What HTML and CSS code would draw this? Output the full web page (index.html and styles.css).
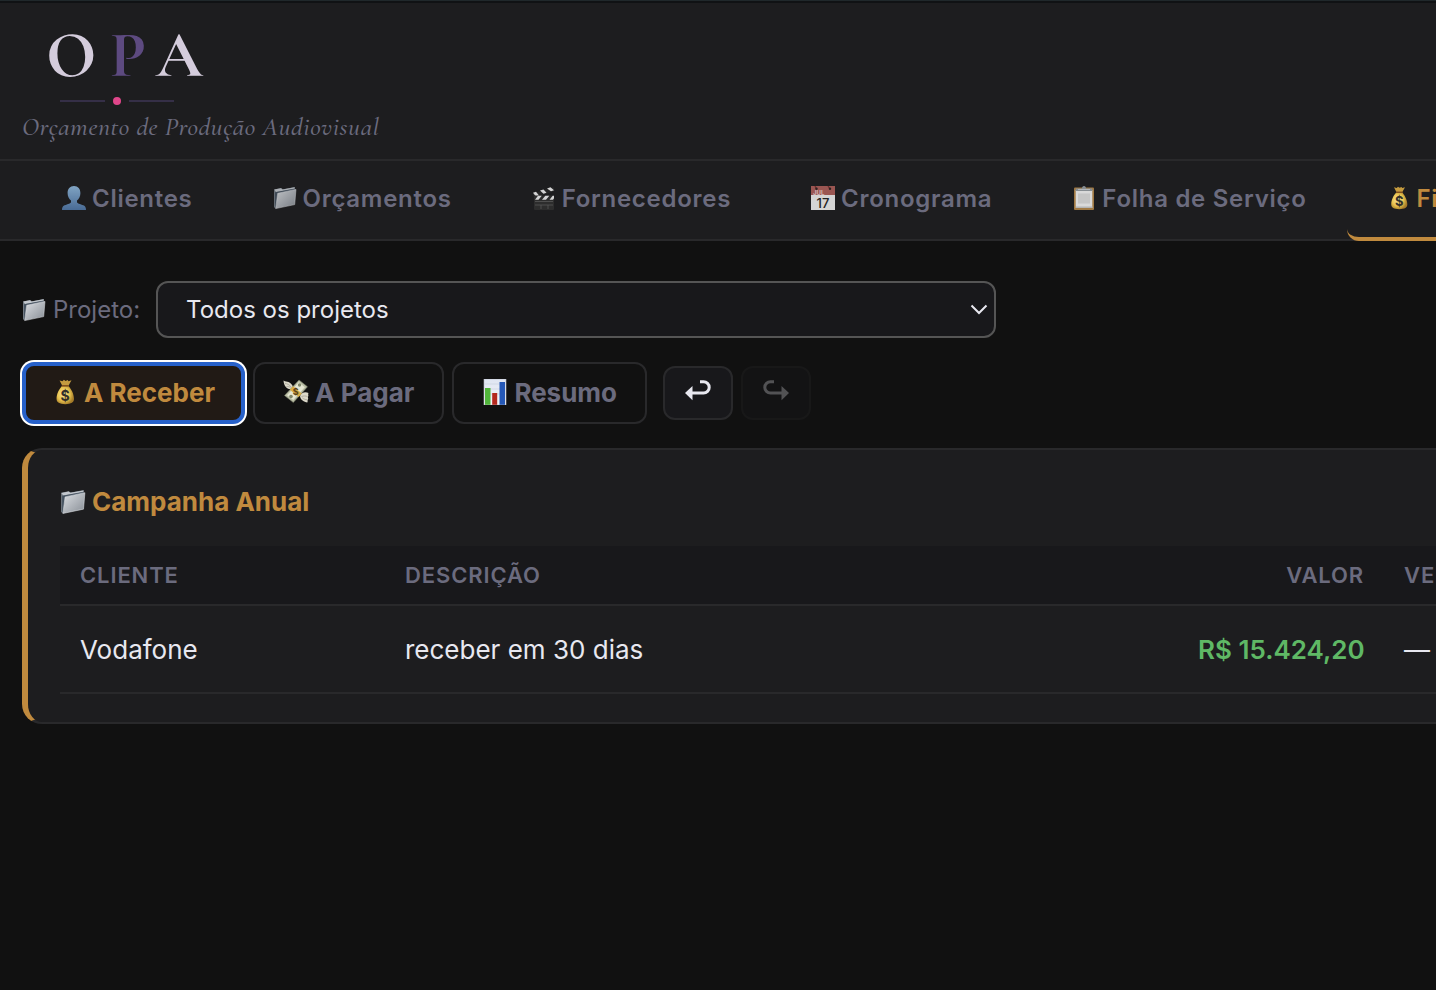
FILE: index.html
```html
<!DOCTYPE html>
<html lang="pt-BR">
<head>
  <meta charset="UTF-8">
  <meta name="viewport" content="width=device-width, initial-scale=1.0">
  <title>OPA</title>
  <link rel="stylesheet" href="styles.css">
</head>
<body>
  <!-- Icon sprite -->
  <svg class="sprite" aria-hidden="true">
    <defs>
      <linearGradient id="blueFill" x1="0" y1="0" x2="0" y2="1">
        <stop offset="0" stop-color="#92bce0"/>
        <stop offset="1" stop-color="#5179aa"/>
      </linearGradient>
      <linearGradient id="greyFill" x1="0" y1="0" x2="1" y2="1">
        <stop offset="0" stop-color="#dcdfe3"/>
        <stop offset="1" stop-color="#878d95"/>
      </linearGradient>
      <radialGradient id="bagFill" cx="0.4" cy="0.45" r="0.6">
        <stop offset="0" stop-color="#fbe797"/>
        <stop offset="0.6" stop-color="#e8c34f"/>
        <stop offset="1" stop-color="#a67c28"/>
      </radialGradient>
      <linearGradient id="paperFill" x1="0" y1="0" x2="0" y2="1">
        <stop offset="0" stop-color="#dfe5f2"/>
        <stop offset="1" stop-color="#f4f5f8"/>
      </linearGradient>
    </defs>
    <symbol id="folder" viewBox="0 0 24 24">
      <path fill="#737b84" d="M1 3.500 8 2l2 1.300L22 1v2.500L5 7 2.500 22.800 1 21z"/>
      <path fill="#c3c8ce" d="M1.300 3.600 8 2.200l1.500 1.300L21.500 1.300v1.300L3 6z"/>
      <path fill="#455260" d="M2 6.200 22 2.700v2L4.800 8.500 2.800 22 2 21z"/>
      <path fill="url(#greyFill)" stroke="#e0e3e6" stroke-width=".5" d="M4.700 7.300 23 3.400l-1.300 15.200L2.700 22.600z"/>
    </symbol>
    <symbol id="bag" viewBox="0 0 24 24">
      <path fill="#c59b3f" d="M7 1.300l2.700.8L11 .8l1.500 1 2-.9.700 1.200L18 1.200l-2.800 5H9.500z"/>
      <path fill="url(#bagFill)" d="M9.400 6.300h5.700c2.500 2.800 5.200 7.600 5.200 12 0 3.400-2.600 4.900-8 4.900s-8.100-1.500-8.100-4.900c0-4.400 2.500-9.200 5.200-12z"/>
      <path stroke="#80501e" stroke-width="1.500" d="M9 6.300h6.500"/>
    </symbol>
  </svg>

  <div class="page">
    <header class="header">
      <h1 class="logo">O<span>P</span>A</h1>
      <div class="divider"><i></i></div>
      <p class="tagline">Orçamento de Produção Audiovisual</p>
    </header>

    <nav class="nav">
      <a href="#clientes">
        <svg class="icon" viewBox="0 0 24 24" aria-hidden="true">
          <path fill="url(#blueFill)" d="M12 0C8 0 5.500 3 5.600 7.200c0 3.200 1.500 5.600 3.400 7.300v1.700c-.4 1.400-5 2.200-7.300 3.600C.5 20.600 0 22 0 24h24c0-2-.5-3.400-1.700-4.200-2.300-1.400-6.900-2.200-7.300-3.600v-1.700c1.900-1.700 3.400-4.100 3.400-7.300C18.500 3 16 0 12 0z"/>
        </svg>
        Clientes
      </a>
      <a href="#orcamentos">
        <svg class="icon" aria-hidden="true"><use href="#folder"/></svg>
        Orçamentos
      </a>
      <a href="#fornecedores">
        <svg class="icon" viewBox="0 0 24 24" aria-hidden="true">
          <path fill="#292929" d="M1 7.500 21.500 1l1.300 4L2 12z"/>
          <path fill="#f5f5f5" d="M1 6.800l3-1 3 3.600-3 1zM8 4.600l3.500-1.100 3 3.200-3 1zM15 2.500l3.500-1.200 3.500 3-3 1z"/>
          <rect x="2" y="9.500" width="20" height="14.500" rx="1" fill="#303030"/>
          <path fill="#f5f5f5" d="M3 13.800h3.500l3.300-4H6zM10 13.800h4l3.300-4h-4zM17.500 13.800H21l1-1.500V9.800h-1.300z"/>
          <path fill="none" stroke="#686868" stroke-width=".7" d="M3 15.500h18M3 19h18M9 19v4M16 19v4"/>
        </svg>
        Fornecedores
      </a>
      <a href="#cronograma">
        <svg class="icon" viewBox="0 0 24 24" aria-hidden="true">
          <rect width="24" height="24" fill="#f4f4f4"/>
          <path fill="#b0605c" d="M0 0h24v9H0z"/>
          <path fill="none" stroke="#7d302e" stroke-width="1.300" d="M4 0l1.500 3M17 0l2 3"/>
          <circle cx="5.500" cy="2.700" r="1.200" fill="#2f2322"/>
          <circle cx="19" cy="2.700" r="1.200" fill="#2f2322"/>
          <text x="2" y="8.500" class="calendar-month">JUL</text>
          <text x="12" y="21.500" text-anchor="middle" class="calendar-day">17</text>
        </svg>
        Cronograma
      </a>
      <a href="#folha">
        <svg class="icon" viewBox="0 0 24 24" aria-hidden="true">
          <rect x="2" y="1.500" width="20" height="22.500" rx="1" fill="#b88a4b"/>
          <path fill="#fafafa" d="M3.700 4h16.600v18H3.700z"/>
          <path fill="#e3e3e3" d="M6 7.500h12v10H6z"/>
          <path fill="#cfcfcf" d="M4 20.500h16.300V22H4z"/>
          <path fill="#9aa1a7" d="M4 2.500h6C10 1 10.700 0 12 0s2 1 2 2.500h6l.5 2.500h-17z"/>
          <path fill="#cbd0d4" d="M6 3h12v1H6z"/>
        </svg>
        Folha de Serviço
      </a>
      <a href="#financeiro" class="active">
        <svg class="icon" viewBox="0 0 24 24" aria-hidden="true">
          <use href="#bag"/>
          <text x="12.200" y="20" text-anchor="middle" class="bag-sign">$</text>
        </svg>
        Financeiro
      </a>
    </nav>

    <main class="content">
      <div class="filter">
        <label for="projeto"><svg class="icon" aria-hidden="true"><use href="#folder"/></svg>Projeto:</label>
        <div class="select-wrap">
          <select id="projeto">
            <option>Todos os projetos</option>
            <option>Campanha Anual</option>
          </select>
          <svg class="chevron" viewBox="0 0 18 12" aria-hidden="true"><path d="M1.500 1.500 9 9l7.500-7.500"/></svg>
        </div>
      </div>

      <div class="toolbar">
        <button type="button" class="tab active">
          <svg class="icon icon-lg" viewBox="0 0 24 24" aria-hidden="true">
            <use href="#bag"/>
            <text x="12.200" y="20" text-anchor="middle" class="bag-sign">$</text>
          </svg>
          A Receber
        </button>
        <button type="button" class="tab">
          <svg class="icon icon-lg" viewBox="0 0 26 26" aria-hidden="true">
            <path fill="#dcd9ca" d="M8 10C4 10.500.8 7 .5 1.500c2 1.300 3.500.8 5 1.500C8 4 9.500 6 10 8zM17 17c1-3 5-5 8.500-3-1 1.200.5 2.500-.4 3.500-.8 1 .8 2-.2 3-.8.8.2 2-.6 3C21 23 17.500 21 17 17z"/>
            <path fill="none" stroke="#9d9a8d" stroke-width=".7" d="M2 4.500c2 .2 4.500 1 6 3.500M3.500 7.500c1.500-.2 3 .2 4 1.200M24.500 17.500c-2-.7-4-.7-6 0M24.300 20.800c-2 0-3.800-1-5-2"/>
            <path fill="#b9bda4" stroke="#6f745f" stroke-width=".6" d="M1.500 16.500 16 1l8.500 6.800L10.300 23.500z"/>
            <path fill="#e5e6d2" d="M4 16.300 15.800 3.200l6 5L10.300 21z"/>
            <circle cx="16.500" cy="6" r="1.700" fill="#7e866b"/>
            <circle cx="8" cy="17.500" r="1.800" fill="#7e866b"/>
            <path fill="#d8ad47" d="M6.800 10.800 10 7.300l8.800 7.200-3.200 3.500z"/>
            <text x="12.800" y="15.800" text-anchor="middle" class="wings-sign">$</text>
          </svg>
          A Pagar
        </button>
        <button type="button" class="tab">
          <svg class="icon icon-lg" viewBox="0 0 26 26" aria-hidden="true">
            <path fill="url(#paperFill)" stroke="#b8bec8" stroke-width=".6" d="M2 0h22v26H2z"/>
            <path stroke="#c7cfdd" stroke-width=".6" d="M2.500 5h21M2.500 10h21M2.500 15h21"/>
            <path fill="#51b53b" d="M3 9h5.500v16.800H3z"/>
            <path fill="#b4281e" d="M10.200 14h5v11.800h-5z"/>
            <path fill="#2558b7" d="M17.500 3h5.500v22.800h-5.500z"/>
          </svg>
          Resumo
        </button>
        <div class="history">
          <button type="button" aria-label="Desfazer">
            <svg viewBox="0 0 26 20"><path class="line" d="M15 1.700h3.500a5.700 5.700 0 0 1 0 11.400H6"/><path class="head" d="M0 13.100 7.500 6v14.200z"/></svg>
          </button>
          <button type="button" aria-label="Refazer" disabled>
            <svg viewBox="0 0 26 20"><path class="line" d="M11 1.700H7.500a5.700 5.700 0 0 0 0 11.400H20"/><path class="head" d="M26 13.100 18.500 6v14.200z"/></svg>
          </button>
        </div>
      </div>

      <section class="card">
        <h2><svg class="icon icon-lg" aria-hidden="true"><use href="#folder"/></svg>Campanha Anual</h2>
        <table>
          <colgroup>
            <col class="col-client">
            <col class="col-desc">
            <col class="col-value">
            <col>
          </colgroup>
          <thead>
            <tr>
              <th>Cliente</th>
              <th>Descrição</th>
              <th class="value">Valor</th>
              <th>Vencimento</th>
            </tr>
          </thead>
          <tbody>
            <tr>
              <td>Vodafone</td>
              <td>receber em 30 dias</td>
              <td class="value">R$ 15.424,20</td>
              <td>—</td>
            </tr>
          </tbody>
        </table>
      </section>
    </main>
  </div>
</body>
</html>
```
FILE: styles.css
```css
/* Reset and Base Styles */
* {
  margin: 0;
  padding: 0;
  box-sizing: border-box;
}

body {
  font-family: Inter, 'Liberation Sans', sans-serif;
  font-size: 26px;
  background: #111111;
  color: #e8e8f0;
}

button,
select {
  font: inherit;
  color: inherit;
}

.page {
  min-height: 100vh;
  overflow: hidden;
  border-top: 1px solid #20282b;
}

/* Icons */
.sprite {
  position: absolute;
  width: 0;
  height: 0;
}

.icon {
  width: 24px;
  height: 24px;
  flex: none;
}

.icon-lg {
  width: 26px;
  height: 26px;
}

.icon text {
  letter-spacing: 0;
}

.calendar-month {
  font-size: 6px;
  font-weight: 700;
  fill: #f0d0ce;
}

.calendar-day {
  font-size: 13px;
  font-weight: 500;
  fill: #222;
}

.bag-sign {
  font-size: 13px;
  font-weight: 700;
  fill: #33302a;
}

.wings-sign {
  font-size: 9px;
  font-weight: 700;
  fill: #5b4317;
}

/* Header */
.header {
  padding: 18px 22px 15px;
  background: #1d1d1f;
  border-top: 2px solid #101214;
  border-bottom: 2px solid #29292b;
}

.logo {
  padding-left: 24px;
  font-family: 'Cormorant Garamond', 'Liberation Serif', serif;
  font-size: 66px;
  font-weight: 700;
  line-height: 68px;
  letter-spacing: 0.2em;
  color: #d4ccdc;
}

.logo span {
  color: #5d4a80;
}

.divider {
  display: flex;
  align-items: center;
  gap: 8px;
  width: 114px;
  height: 8px;
  margin: 8px 0 5px 38px;
}

.divider::before,
.divider::after {
  content: "";
  flex: 1;
  height: 2px;
  background: #352f47;
}

.divider i {
  width: 8px;
  height: 8px;
  border-radius: 50%;
  background: #e0468a;
}

.tagline {
  font-family: 'Cormorant Garamond', 'Liberation Serif', serif;
  font-size: 26px;
  font-style: italic;
  font-weight: 500;
  line-height: 34px;
  letter-spacing: 0.02em;
  color: #6b6b7e;
}

/* Navigation */
.nav {
  display: flex;
  padding: 0 22px;
  background: #1d1d1f;
  box-shadow: inset 0 -2px #29292b;
}

.nav a {
  display: flex;
  flex: none;
  align-items: center;
  gap: 6px;
  height: 80px;
  padding: 0 40px 2px;
  border-bottom: 4px solid transparent;
  border-radius: 12px;
  font-size: 24px;
  font-weight: 600;
  letter-spacing: 0.03em;
  color: #6b6b7e;
  text-decoration: none;
}

.nav .icon {
  opacity: 0.85;
}

.nav a.active {
  border-bottom-color: #c08a3e;
  color: #c08a3e;
}

.nav a.active .icon {
  opacity: 1;
}

/* Project filter */
.content {
  padding: 40px 22px;
}

.filter {
  display: flex;
  align-items: center;
  gap: 16px;
  margin-bottom: 24px;
}

.filter label {
  display: flex;
  align-items: center;
  gap: 7px;
  font-size: 24px;
  color: #6b6b7e;
}

.select-wrap {
  position: relative;
  flex: 0 1 840px;
}

.select-wrap select {
  width: 100%;
  height: 57px;
  padding: 0 28px;
  appearance: none;
  background: #18181b;
  border: 2px solid #555555;
  border-radius: 12px;
  font-size: 24px;
}

.chevron {
  position: absolute;
  top: 23px;
  right: 8px;
  width: 18px;
  height: 12px;
  fill: none;
  stroke: #e8e8f0;
  stroke-width: 2;
  pointer-events: none;
}

/* Toolbar */
.toolbar {
  display: flex;
  align-items: center;
  gap: 8px;
  margin-bottom: 24px;
}

.tab {
  display: flex;
  align-items: center;
  gap: 6px;
  height: 62px;
  padding: 0 28px 2px;
  background: transparent;
  border: 2px solid #29292b;
  border-radius: 12px;
  font-weight: 700;
  color: #6b6b7e;
  cursor: pointer;
}

.tab.active {
  padding: 0 26px 2px;
  background: #211a15;
  border: 4px solid #2761ca;
  box-shadow: 0 0 0 2px #ffffff;
  color: #c08a3e;
}

.history {
  display: flex;
  gap: 8px;
  margin-left: 8px;
}

.history button {
  width: 70px;
  height: 54px;
  padding-bottom: 6px;
  background: #18181b;
  border: 2px solid #29292b;
  border-radius: 12px;
  cursor: pointer;
}

.history button:disabled {
  opacity: 0.3;
  cursor: default;
}

.history svg {
  display: block;
  width: 26px;
  height: 20px;
  margin: 0 auto;
  overflow: visible;
}

.history .line {
  fill: none;
  stroke: currentColor;
  stroke-width: 3;
}

.history .head {
  fill: currentColor;
}

/* Card */
.card {
  width: max-content;
  padding: 28px 32px;
  background: #1d1d1f;
  border: 2px solid #29292b;
  border-left: 6px solid #c08a3e;
  border-radius: 20px;
}

.card h2 {
  display: flex;
  align-items: center;
  gap: 6px;
  margin-bottom: 20px;
  font-size: 26px;
  font-weight: 700;
  line-height: 48px;
  color: #c08a3e;
}

table {
  width: 1640px;
  table-layout: fixed;
  border-collapse: separate;
  border-spacing: 0;
}

.col-client {
  width: 325px;
}

.col-desc {
  width: 793px;
}

.col-value {
  width: 206px;
}

th {
  height: 60px;
  padding: 0 20px;
  background: #18181b;
  border-bottom: 2px solid #29292b;
  font-size: 22px;
  font-weight: 600;
  letter-spacing: 0.04em;
  text-align: left;
  text-transform: uppercase;
  color: #6b6b7e;
}

td {
  height: 88px;
  padding: 0 20px;
  border-bottom: 2px solid #29292b;
}

.value {
  text-align: right;
  white-space: nowrap;
}

td.value {
  font-weight: 600;
  color: #5fb865;
}
```
